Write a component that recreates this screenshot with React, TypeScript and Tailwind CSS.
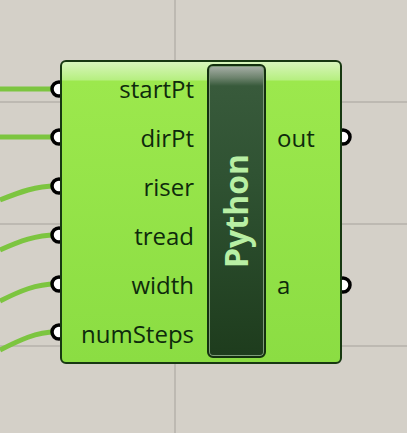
const inputs = ['startPt', 'dirPt', 'riser', 'tread', 'width', 'numSteps']
const outputs = ['out', 'a']

const inY = [89, 137, 186, 235, 284, 332]
const outY = [137, 285]

export default function App() {
  return (
    <div className="relative w-[407px] h-[433px] overflow-hidden bg-[#d4d0c8] font-['Open_Sans',sans-serif]">
      {/* canvas grid + wires */}
      <svg className="absolute inset-0" width="407" height="433">
        <g stroke="#bdb9b2" strokeWidth="2">
          <line x1="0" y1="102" x2="407" y2="102" />
          <line x1="0" y1="224" x2="407" y2="224" />
          <line x1="0" y1="346" x2="407" y2="346" />
          <line x1="175" y1="0" x2="175" y2="433" />
        </g>
        <g stroke="#7cc540" strokeWidth="5" fill="none">
          <path d="M0 89 L56 89" />
          <path d="M0 137 L56 137" />
          <path d="M0 200 C 20 192, 36 186, 56 186" />
          <path d="M0 250 C 20 241, 36 235, 56 235" />
          <path d="M0 301 C 20 291, 36 284, 56 284" />
          <path d="M0 350 C 20 340, 36 332, 56 332" />
        </g>
        <g stroke="#000" strokeWidth="3.5" fill="#fff">
          {inY.map((y) => (
            <circle key={y} cx="59" cy={y} r="7" />
          ))}
          {outY.map((y) => (
            <circle key={y} cx="343" cy={y} r="7" />
          ))}
        </g>
      </svg>

      {/* component node */}
      <div className="absolute left-[60px] top-[60px] w-[282px] h-[304px] rounded-[6px] border-2 border-[#173811] bg-[linear-gradient(180deg,#d8f6bc_0px,#b6ef80_18px,#9ce84d_19px,#8bdd43_100%)] flex pt-[2px] pb-[4px]">
        <div className="w-[145px] flex flex-col pr-[13px]">
          {inputs.map((n) => (
            <div key={n} className="flex-1 flex items-center justify-end text-[24px] leading-none text-[#0e2a0c]">
              {n}
            </div>
          ))}
        </div>
        <div className="w-[59px] rounded-[6px] border-2 border-[#14300f] shadow-[inset_0_0_0_1px_#7f9b7a] bg-[linear-gradient(180deg,#a8b0a8_0px,#6c826c_12px,#385a3b_20px,#2f5232_40%,#1e3c1d_100%)] flex items-center justify-center">
          <span className="block -rotate-90 whitespace-nowrap text-[32px] font-bold leading-none text-[#b8efa4]">
            Python
          </span>
        </div>
        <div className="flex-1 flex flex-col pl-[11px]">
          {outputs.map((n) => (
            <div key={n} className="flex-1 flex items-center text-[24px] leading-none text-[#0e2a0c]">
              {n}
            </div>
          ))}
        </div>
      </div>
    </div>
  )
}
